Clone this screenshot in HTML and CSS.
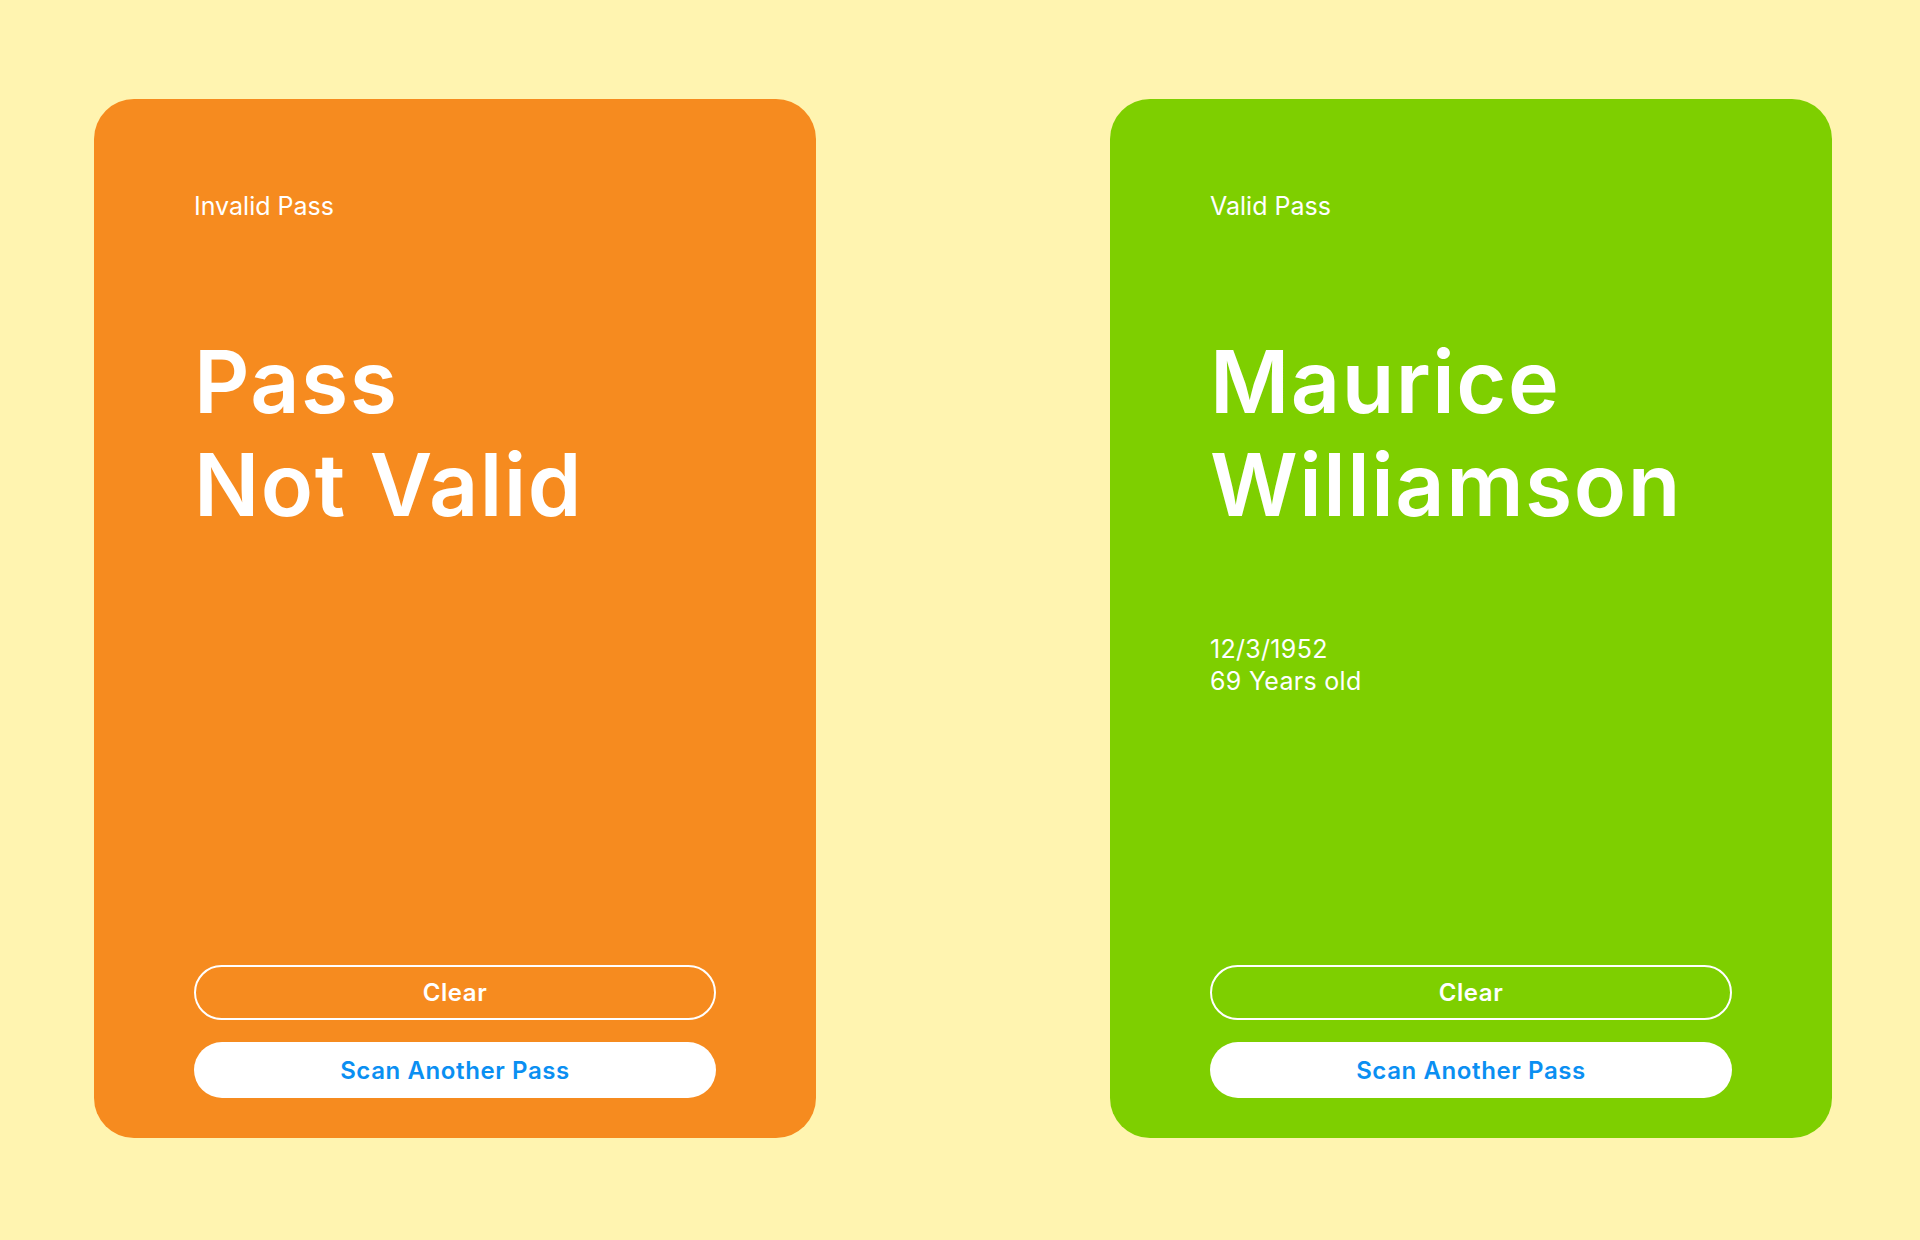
FILE: index.html
```html
<!DOCTYPE html>
<html lang="en">
<head>
<meta charset="utf-8">
<title>Pass Scanner</title>
<link rel="stylesheet" href="styles.css">
</head>
<body>
<main class="stage">
  <section class="card card--invalid">
    <p class="label">Invalid Pass</p>
    <h1 class="title">Pass<br>Not Valid</h1>
    <div class="actions">
      <button class="btn btn--outline">Clear</button>
      <button class="btn btn--solid">Scan Another Pass</button>
    </div>
  </section>
  <section class="card card--valid">
    <p class="label">Valid Pass</p>
    <h1 class="title">Maurice<br>Williamson</h1>
    <p class="meta">12/3/1952<br>69 Years old</p>
    <div class="actions">
      <button class="btn btn--outline">Clear</button>
      <button class="btn btn--solid">Scan Another Pass</button>
    </div>
  </section>
</main>
</body>
</html>
```
FILE: styles.css
```css
* { box-sizing: border-box; }
html, body {
  margin: 0;
  padding: 0;
  background: #fff4b0;
}
body {
  font-family: Inter, "Noto Sans", sans-serif;
  color: #ffffff;
  width: 1920px;
  height: 1240px;
  overflow: hidden;
}
.stage {
  display: flex;
  gap: 294px;
  padding: 99px 0 0 94px;
}
.card {
  width: 722px;
  height: 1039px;
  border-radius: 40px;
  padding: 91px 100px 40px 100px;
  display: flex;
  flex-direction: column;
}
.card--invalid { background: #f68b1f; }
.card--valid { background: #7ecf00; }
.label {
  margin: 0;
  font-size: 25px;
  line-height: 32px;
  font-weight: 400;
  letter-spacing: 0;
}
.title {
  margin: 109px 0 0 0;
  font-size: 86px;
  line-height: 103px;
  font-weight: 600;
  letter-spacing: 1.5px;
}
.meta {
  margin: 96px 0 0 0;
  font-size: 25px;
  line-height: 32px;
  font-weight: 400;
  letter-spacing: 0.3px;
}
.actions {
  margin-top: auto;
  display: flex;
  flex-direction: column;
  gap: 22px;
}
.btn {
  font-family: Inter, "Noto Sans", sans-serif;
  font-size: 24px;
  font-weight: 600;
  letter-spacing: 0.6px;
  width: 522px;
  border-radius: 999px;
  cursor: pointer;
  padding: 0;
}
.btn--outline {
  height: 55px;
  background: transparent;
  border: 2px solid #ffffff;
  color: #ffffff;
}
.btn--solid {
  height: 56px;
  background: #ffffff;
  border: none;
  color: #0a8ff2;
}
```
